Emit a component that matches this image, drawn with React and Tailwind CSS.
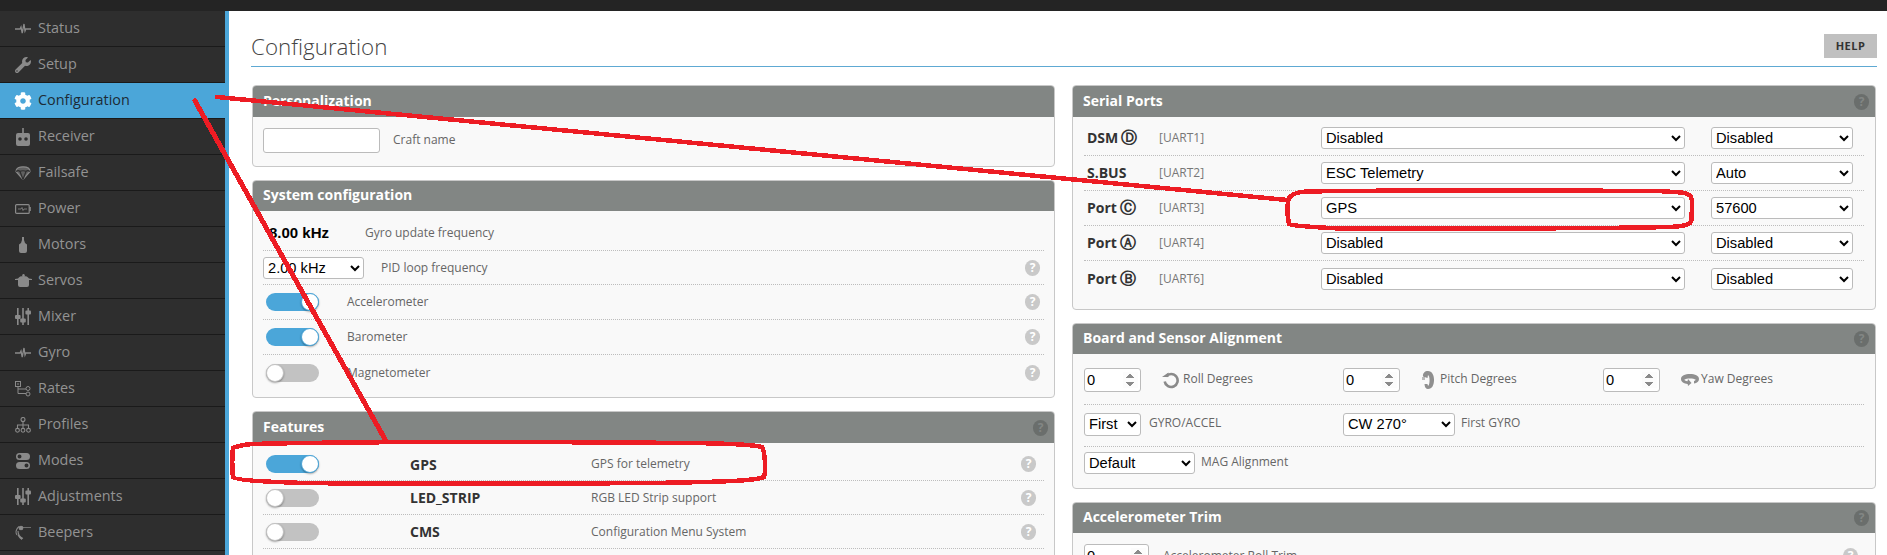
import React from 'react';
import { FaCog, FaWrench } from 'react-icons/fa';

const Pulse = () => (
  <svg width="16" height="12" viewBox="0 0 16 12" fill="none" stroke="currentColor" strokeWidth="1.3">
    <path d="M0 6h5l1-2 1.2 6L9 1l1 7 .8-2H16" />
  </svg>
);

const Sliders = () => (
  <svg width="16" height="17" viewBox="0 0 16 17" fill="currentColor">
    <rect x="2" y="0" width="1.6" height="17" />
    <rect x="7.2" y="0" width="1.6" height="17" />
    <rect x="12.4" y="0" width="1.6" height="17" />
    <rect x="0" y="7" width="5.6" height="4" rx="1" />
    <rect x="5.2" y="10.5" width="5.6" height="4" rx="1" />
    <rect x="10.4" y="2.5" width="5.6" height="4" rx="1" />
  </svg>
);

const sideIcons = {
  Status: <Pulse />,
  Setup: <FaWrench size={16} />,
  Configuration: <FaCog size={18} color="#fff" />,
  Receiver: (
    <svg width="14" height="18" viewBox="0 0 14 18" fill="currentColor">
      <rect x="6.2" y="0" width="1.6" height="6" />
      <path fillRule="evenodd" d="M2 5h10a2 2 0 0 1 2 2v9a2 2 0 0 1-2 2H2a2 2 0 0 1-2-2V7a2 2 0 0 1 2-2zM4 9.2a1.8 1.8 0 1 0 0 3.6 1.8 1.8 0 0 0 0-3.6zm6 0a1.8 1.8 0 1 0 0 3.6 1.8 1.8 0 0 0 0-3.6z" />
    </svg>
  ),
  Failsafe: (
    <svg width="16" height="14" viewBox="0 0 16 14" fill="none" stroke="currentColor" strokeWidth="1.2">
      <path d="M1 5.5C1 2 4.500.8 8 .8s7 1.200 7 4.700L8 13.500z" fill="currentColor" fillOpacity=".55" />
      <path d="M1 5.500c1.500-1 3-1 4 0 1-1 5-1 6 0 1-1 2.500-1 4 0M5 5.500l3 8 3-8" stroke="#2e2e2e" />
    </svg>
  ),
  Power: (
    <svg width="16" height="10" viewBox="0 0 16 10" fill="none" stroke="currentColor">
      <rect x=".6" y=".6" width="13.600" height="8.800" rx="1" strokeWidth="1.200" />
      <rect x="14.400" y="3" width="1.400" height="4" fill="currentColor" stroke="none" />
      <path d="M3 5h3l1-1.500 1 3 1-1.500h3" strokeWidth=".8" />
    </svg>
  ),
  Motors: (
    <svg width="10" height="16" viewBox="0 0 10 16" fill="currentColor">
      <path d="M4 0h2v3l1 3 2 1.500V14a2 2 0 0 1-2 2H3a2 2 0 0 1-2-2V7.500L3 6l1-3z" />
    </svg>
  ),
  Servos: (
    <svg width="17" height="13" viewBox="0 0 17 13" fill="currentColor">
      <circle cx="8.500" cy="1.200" r="1.200" />
      <path d="M3 4.500C4 2.800 6 2 8.500 2s4.500.8 5.500 2.500l3 .5v1h-3v5a2 2 0 0 1-2 2H5a2 2 0 0 1-2-2V6H0V5z" />
    </svg>
  ),
  Mixer: <Sliders />,
  Gyro: <Pulse />,
  Rates: (
    <svg width="16" height="16" viewBox="0 0 16 16" fill="none" stroke="currentColor" strokeWidth="1">
      <rect x=".5" y=".5" width="5" height="5" />
      <path d="M2 3h2M3 5.500V12.500h8M3 8h8" />
      <circle cx="13" cy="7.500" r="2" />
      <circle cx="13" cy="13" r="2" />
    </svg>
  ),
  Profiles: (
    <svg width="16" height="16" viewBox="0 0 16 16" fill="none" stroke="currentColor" strokeWidth="1.100">
      <circle cx="8" cy="2.500" r="2" />
      <path d="M8 4.500V11M2.500 11V8h11v3" />
      <circle cx="2.500" cy="13.300" r="1.900" />
      <circle cx="8" cy="13.300" r="1.900" />
      <circle cx="13.500" cy="13.300" r="1.900" />
    </svg>
  ),
  Modes: (
    <svg width="14" height="16" viewBox="0 0 14 16" fill="currentColor">
      <path fillRule="evenodd" d="M3.500 0h7a3.500 3.500 0 0 1 0 7h-7a3.500 3.500 0 0 1 0-7zm0 1.500a2 2 0 1 0 0 4 2 2 0 0 0 0-4z" />
      <path fillRule="evenodd" d="M3.500 9h7a3.500 3.500 0 0 1 0 7h-7a3.500 3.500 0 0 1 0-7zm7 1.500a2 2 0 1 0 0 4 2 2 0 0 0 0-4z" />
    </svg>
  ),
  Adjustments: <Sliders />,
  Beepers: (
    <svg width="16" height="15" viewBox="0 0 16 15" fill="none" stroke="currentColor" strokeWidth="1.100">
      <path d="M7 2.500h9" strokeWidth=".7" />
      <circle cx="6" cy="3" r="1.800" fill="currentColor" />
      <path d="M4 1.500C1.500 3.500 0 7 2 10M3 6c0 3 1.500 6 5 7.500M3 10c1 2 2.500 3.500 4 4.500" />
    </svg>
  ),
};

const sideItems = ['Status', 'Setup', 'Configuration', 'Receiver', 'Failsafe', 'Power', 'Motors', 'Servos', 'Mixer', 'Gyro', 'Rates', 'Profiles', 'Modes', 'Adjustments', 'Beepers'];

const Help = ({ dark }) => (
  <span className={`flex h-[16px] w-[15px] shrink-0 items-center justify-center rounded-full text-[12px] font-bold leading-none ${dark ? 'bg-[#6a6e6c] text-[#828684]' : 'bg-[#c9c9c9] text-white'}`}>?</span>
);

const Toggle = ({ on }) => (
  <span className={`relative block h-[18px] w-[53px] shrink-0 rounded-full ${on ? 'bg-[#4ba6d9]' : 'bg-[#c2c2c2]'}`}>
    <span className={`absolute top-0 h-[18px] w-[18px] rounded-full bg-white shadow-[0_1px_2px_rgba(0,0,0,0.35)] ${on ? 'right-0 border border-[#4ba6d9]' : 'left-0 border border-[#c2c2c2]'}`} />
  </span>
);

const Panel = ({ title, height, helpIcon, tallHeader, children }) => (
  <section className={`overflow-hidden rounded-[4px] border border-[#c8c8c8] bg-[#f9f9f9] ${height}`}>
    <header className={`flex items-center justify-between bg-[#828684] pl-[10px] pr-[6px] ${tallHeader ? 'h-[31px]' : 'h-[30px]'}`}>
      <h3 className="pb-[3px] text-[14px] font-bold text-white">{title}</h3>
      {helpIcon && <Help dark />}
    </header>
    {children}
  </section>
);

const Select = ({ value, width, height = 'h-[22px]' }) => (
  <select defaultValue={value} className={`${width} ${height} shrink-0 rounded-[3px] border border-[#bbbbbb] bg-white font-['Liberation_Sans',sans-serif] text-[14.67px] text-black`}>
    <option>{value}</option>
  </select>
);

const NumberInput = ({ width = 'w-[57px]' }) => (
  <input type="number" defaultValue="0" className={`${width} h-[24px] shrink-0 rounded-[3px] border border-[#bbbbbb] bg-white pl-[2px] pr-[2px] font-['Liberation_Sans',sans-serif] text-[14.67px] text-black [&::-webkit-inner-spin-button]:opacity-100`} />
);

const SysRow = ({ on, label, last }) => (
  <div className={`flex h-[35px] items-center pl-[3px] pr-[4px] ${last ? '' : 'border-b border-dotted border-[#bdbdbd]'}`}>
    <Toggle on={on} />
    <span className="ml-[28px] flex-1 text-[12px] text-[#666]">{label}</span>
    <Help />
  </div>
);

const FeatureRow = ({ on, name, desc, height = 'h-[34px]' }) => (
  <div className={`flex ${height} items-center border-b border-dotted border-[#bdbdbd] pl-[3px] pr-[8px]`}>
    <Toggle on={on} />
    <span className="ml-[91px] w-[181px] text-[14px] font-bold text-[#333]">{name}</span>
    <span className="flex-1 text-[12px] text-[#666]">{desc}</span>
    <Help />
  </div>
);

const PortRow = ({ name, mark, uart, func, baud, last }) => (
  <div className={`flex h-[35px] items-center pl-[3px] ${last ? '' : 'border-b border-dotted border-[#bdbdbd]'}`}>
    <span className="w-[72px] text-[14px] font-bold leading-[20px] text-[#333]">
      {name}
      {mark && <span className="ml-[3px] text-[16px] font-bold leading-none">{mark}</span>}
    </span>
    <span className="w-[162px] text-[12px] text-[#777]">{uart}</span>
    <Select value={func} width="w-[364px]" />
    <span className="w-[26px]" />
    <Select value={baud} width="w-[142px]" />
  </div>
);

const portRows = [
  { name: 'DSM', mark: 'Ⓓ', uart: '[UART1]', func: 'Disabled', baud: 'Disabled' },
  { name: 'S.BUS', uart: '[UART2]', func: 'ESC Telemetry', baud: 'Auto' },
  { name: 'Port', mark: 'Ⓒ', uart: '[UART3]', func: 'GPS', baud: '57600' },
  { name: 'Port', mark: 'Ⓐ', uart: '[UART4]', func: 'Disabled', baud: 'Disabled' },
  { name: 'Port', mark: 'Ⓑ', uart: '[UART6]', func: 'Disabled', baud: 'Disabled', last: true },
];

const RollIcon = () => (
  <svg width="17" height="17" viewBox="0 0 17 17" fill="none" stroke="#8a8a8a" strokeWidth="2.600">
    <path d="M4 4.500a6.500 6.500 0 1 1-1.300 5" />
    <path d="M0 5h6.500V.5z" fill="#8a8a8a" stroke="none" />
  </svg>
);

const PitchIcon = () => (
  <svg width="12" height="18" viewBox="0 0 12 18" fill="#8f8f8f">
    <path d="M6 0c4 0 6 4 6 9s-2 9-6 9c-2 0-3.500-2-3.500-5h3c0 1 .5 2 1 1.500C8 13 8 5 6 4L5.500 7 1 5.500C.5 2 3 0 6 0z" />
    <path d="M0 6h3v3H0z" opacity=".6" />
  </svg>
);

const YawIcon = () => (
  <svg width="18" height="12" viewBox="0 0 18 12" fill="#8f8f8f">
    <path d="M9 0c5 0 9 1.500 9 5 0 2.500-2 4-5 4.500V7c1-.3 2-1 1.500-1.500C13 4 5 4 3.500 5.500 3 6 4.500 7 6.500 7.300L7 5l3.500 4L7 12l-.3-2C3 9.500 0 8 0 5c0-3.500 4-5 9-5z" />
  </svg>
);

export default function App() {
  return (
    <div className="relative flex h-[555px] flex-col overflow-hidden bg-white font-['Open_Sans',sans-serif]">
      <div className="h-[11px] shrink-0 bg-[#242424]" />
      <div className="flex min-h-0 flex-1">
        <nav className="w-[229px] shrink-0 border-r-4 border-[#4ba6d9] bg-[#2e2e2e]">
          {sideItems.map((item) => {
            const active = item === 'Configuration';
            return (
              <div
                key={item}
                className={`flex h-[36px] items-center border-b border-[#1a1a1a] ${active ? 'bg-[#4ba6d9] text-[#1d2b36]' : 'text-[#939393]'}`}
              >
                <span className={`flex w-[38px] justify-center pl-[8px] ${active ? '' : 'text-[#8a8a8a]'}`}>{sideIcons[item]}</span>
                <span className="pb-[2px] text-[14.4px]">{item}</span>
              </div>
            );
          })}
        </nav>

        <main className="min-w-0 flex-1 pl-[22px] pr-[10px]">
          <div className="flex h-[56px] items-start justify-between border-b border-[#5ea9d3]">
            <h1 className="mt-[22px] text-[22.4px] font-light leading-[28px] text-[#444]">Configuration</h1>
            <button className="mt-[23px] h-[24px] w-[53px] bg-[#c0c0c0] text-[11px] font-bold tracking-[0.5px] text-[#333]">HELP</button>
          </div>

          <div className="mt-[18px] flex gap-[17px] pl-[1px]">
            <div className="flex w-[803px] shrink-0 flex-col gap-[13px]">
              <Panel title="Personalization" height="h-[82px]" tallHeader>
                <div className="flex items-center px-[10px] pt-[11px]">
                  <input className="h-[25px] w-[117px] rounded-[3px] border border-[#bbbbbb] bg-white" />
                  <span className="ml-[13px] pb-[2px] text-[12px] text-[#666]">Craft name</span>
                </div>
              </Panel>

              <Panel title="System configuration" height="h-[218px]">
                <div className="px-[10px] pt-[5px]">
                  <div className="flex h-[35px] items-center border-b border-dotted border-[#bdbdbd]">
                    <span className="ml-[6px] w-[96px] font-['Liberation_Sans',sans-serif] text-[15px] font-bold text-black">8.00 kHz</span>
                    <span className="text-[12px] text-[#666]">Gyro update frequency</span>
                  </div>
                  <div className="flex h-[34px] items-center border-b border-dotted border-[#bdbdbd] pr-[4px]">
                    <Select value="2.00 kHz" width="w-[101px]" />
                    <span className="ml-[17px] flex-1 text-[12px] text-[#666]">PID loop frequency</span>
                    <Help />
                  </div>
                  <SysRow on label="Accelerometer" />
                  <SysRow on label="Barometer" />
                  <SysRow label="Magnetometer" last />
                </div>
              </Panel>

              <Panel title="Features" height="h-[160px]" helpIcon tallHeader>
                <div className="px-[10px] pt-[5px]">
                  <FeatureRow on name="GPS" desc="GPS for telemetry" height="h-[33px]" />
                  <FeatureRow name="LED_STRIP" desc="RGB LED Strip support" />
                  <FeatureRow name="CMS" desc="Configuration Menu System" />
                </div>
              </Panel>
            </div>

            <div className="flex w-[804px] shrink-0 flex-col gap-[13px]">
              <Panel title="Serial Ports" height="h-[225px]" helpIcon tallHeader>
                <div className="px-[11px] pt-[4px]">
                  {portRows.map((row) => (
                    <PortRow key={row.uart} {...row} />
                  ))}
                </div>
              </Panel>

              <Panel title="Board and Sensor Alignment" height="h-[166px]" helpIcon>
                <div className="px-[11px]">
                  <div className="flex h-[51px] items-center border-b border-dotted border-[#bdbdbd] pt-[2px] text-[12px] text-[#666]">
                    <div className="flex w-[259px] items-center">
                      <NumberInput />
                      <span className="ml-[21px] mr-[4px] flex"><RollIcon /></span>
                      <span className="pb-[2px]">Roll Degrees</span>
                    </div>
                    <div className="flex w-[260px] items-center">
                      <NumberInput />
                      <span className="ml-[22px] mr-[6px] flex"><PitchIcon /></span>
                      <span className="pb-[2px]">Pitch Degrees</span>
                    </div>
                    <div className="flex items-center">
                      <NumberInput />
                      <span className="ml-[21px] mr-[2px] flex"><YawIcon /></span>
                      <span className="pb-[2px]">Yaw Degrees</span>
                    </div>
                  </div>
                  <div className="flex h-[42px] items-center border-b border-dotted border-[#bdbdbd] pb-[3px] text-[12px] text-[#666]">
                    <div className="flex w-[259px] items-center">
                      <Select value="First" width="w-[57px]" height="h-[23px]" />
                      <span className="ml-[8px] pb-[2px]">GYRO/ACCEL</span>
                    </div>
                    <Select value="CW 270°" width="w-[112px]" height="h-[23px]" />
                    <span className="ml-[6px] pb-[2px]">First GYRO</span>
                  </div>
                  <div className="flex h-[32px] items-center text-[12px] text-[#666]">
                    <Select value="Default" width="w-[111px]" />
                    <span className="ml-[6px] pb-[2px]">MAG Alignment</span>
                  </div>
                </div>
              </Panel>

              <Panel title="Accelerometer Trim" height="h-[60px]" helpIcon>
                <div className="flex items-center pl-[11px] pr-[17px] pt-[11px]">
                  <NumberInput width="w-[65px]" />
                  <span className="ml-[14px] flex-1 text-[12px] text-[#666]">Accelerometer Roll Trim</span>
                  <Help />
                </div>
              </Panel>
            </div>
          </div>
        </main>
      </div>

      {/* hand drawn annotations over the screenshot */}
      <svg className="pointer-events-none absolute left-0 top-0" width="1887" height="555" fill="none" stroke="#ed1c24" strokeWidth="4.5" strokeLinecap="round" shapeRendering="crispEdges">
        <path d="M217 97L1287 200" />
        <path d="M195 101L386 441" strokeWidth="5" />
        <path d="M1306 191.500C1400 190 1560 190.500 1658 191L1682 192.500C1691 194 1692 197 1692 204L1691.500 220C1691 225 1685 226 1670 227C1600 228.500 1420 229 1340 228.500C1310 227 1292 226 1289 224C1287 214 1287 204 1289 198C1292 193 1300 192 1306 191.500z" />
        <path d="M252 444C350 441.500 560 442 690 443C730 443.500 755 445 762 447C765 452 766 470 764 477C755 481 720 482 650 483C520 484 320 484 290 482.500C260 481.500 235 480 233 477C232 470 232 455 233 448C238 446 245 444.500 252 444z" />
      </svg>
    </div>
  );
}
